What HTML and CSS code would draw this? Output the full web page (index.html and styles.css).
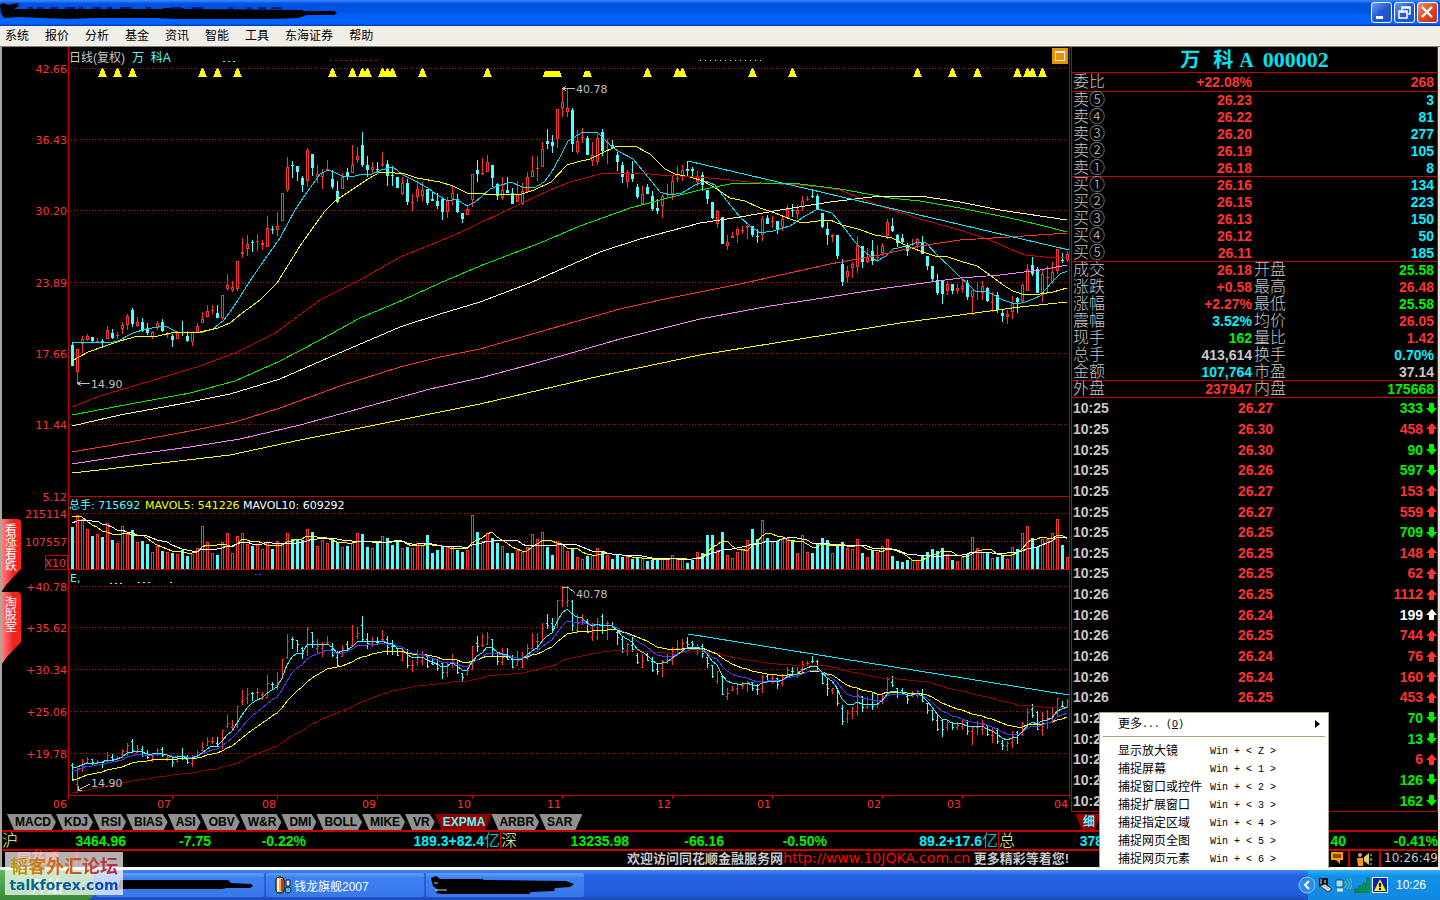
FILE: index.html
```html
<!doctype html>
<html lang="zh-CN">
<head>
  <meta charset="UTF-8">
  <meta name="viewport" content="width=device-width, initial-scale=1.0">
  <title>万科A 000002 日线</title>
  <link rel="stylesheet" href="styles.css">
</head>
<body>
  <header class="titlebar">
    <svg class="scribble" width="340" height="26" aria-hidden="true">
      <path d="M0 5 L3 3 L8 5 L18 3 L19 6 L14 9 L64 9 L163 9 L164 8 L183 8 L184 9 L303 10 L303 11 L334 11 L337 13 L334 15 L307 15 L298 18 L270 19 L176 19 L156 18 L94 18 L70 19 L18 17 L4 18 L1 13 Z"/>
      <path class="faint" d="M28 8h5m4 0h7m6 0h8m7 0h10m4 0h4m10 0h8m6 0h5m8 0h12m14 0h5m20 0h10m10 0h12m26 0h4m14 0h5m6 0h8m5 0h11"/>
    </svg>
    <div class="win-buttons">
      <button aria-label="最小化"><svg width="19" height="19"><path d="M4 13h7v3H4z" fill="#fff"/></svg></button>
      <button aria-label="还原"><svg width="19" height="19"><path d="M7 7V4h8v7h-3M4 8h8v7H4zM7 5h8M4 9h8" fill="none" stroke="#fff" stroke-width="1.5"/></svg></button>
      <button class="close" aria-label="关闭"><svg width="19" height="19"><path d="M4 4l10 10M14 4L4 14" stroke="#fff" stroke-width="2.4"/></svg></button>
    </div>
  </header>
  <nav class="menubar">
    <button>系统</button><button>报价</button><button>分析</button><button>基金</button><button>资讯</button><button>智能</button><button>工具</button><button>东海证券</button><button>帮助</button>
  </nav>

  <main class="app">
    <div class="work">
      <section class="chart-pane">
        <svg id="chart" viewBox="2 47 1068 765" role="img" aria-label="日线图"></svg>
        <a href="#" class="flag">看涨看跌</a>
        <a href="#" class="flag flag-low">淘股堂</a>
      </section>
      <section class="quote">
        <h1>万 <span>科</span>A <b>000002</b></h1>
        <table class="book"><tbody id="book"></tbody></table>
        <table class="ticks"><tbody id="ticks"></tbody></table>
      </section>
    </div>

    <div class="tabbar">
      <div class="tabs">
        <button>MACD</button><button>KDJ</button><button>RSI</button><button>BIAS</button><button>ASI</button><button>OBV</button><button>W&amp;R</button><button>DMI</button><button>BOLL</button><button>MIKE</button><button>VR</button><button class="active">EXPMA</button><button>ARBR</button><button class="last">SAR</button>
      </div>
      <div class="side-tabs"><button class="active">细</button></div>
    </div>

    <div class="indices">
      <div class="index sh"><i>沪</i><span>3464.96</span><span>-7.75</span><span>-0.22%</span><span class="cyan">189.3+82.4<em>亿</em></span></div>
      <div class="index sz"><i>深</i><span>13235.98</span><span>-66.16</span><span>-0.50%</span><span class="cyan">89.2+17.6<em>亿</em></span></div>
      <div class="index all"><i>总</i><span class="cyan">378</span><span>40</span><span>-0.41%</span></div>
    </div>

    <div class="news">
      <span class="brand">同花顺</span>
      <p>欢迎访问同花顺金融服务网<a href="#">http://www.10JQKA.com.cn</a> 更多精彩等着您!</p>
      <span class="box"><svg width="14" height="14"><path d="M1 1h12v8H10v4L6 9H1z" fill="#ff9a00"/><path d="M3 4h8M3 6h8" stroke="#000"/></svg></span>
      <span class="box wide"><svg width="16" height="16"><circle cx="4" cy="4" r="2" fill="#c8a080"/><path d="M1 7h6v8H2z" fill="#ff9a00"/><path d="M8 6l5-4v12l-5-4z" fill="#d8d070"/><path d="M15 3v2m0 2v3m0 2v2" stroke="#fff080"/></svg></span>
      <time>10:26:49</time>
    </div>
  </main>

  <footer class="taskbar">
    <button class="start">开始</button>
    <button class="task"><svg class="ink" width="145" height="16"><path d="M2 3 L110 3 L113 6 L133 7 L135 9 L132 11 L108 11 L104 12 L0 12Z"/></svg></button>
    <button class="task"><svg width="18" height="18"><path d="M2 4q0-3 4-3t4 3v10q0 3-4 3t-4-3z" fill="#f4b030" stroke="#000"/><path d="M4 2v14" stroke="#fff" stroke-width="2"/><path d="M8 3v12" stroke="#d03010" stroke-width="2"/><path d="M12 4h4v6h-4z" fill="#dde" stroke="#124"/><circle cx="14" cy="14" r="3" fill="#40c0d0" stroke="#124"/></svg>钱龙旗舰2007</button>
    <button class="task"><svg class="ink" width="148" height="18"><path d="M1 2 L6 0 L10 3 L52 3 L54 4 L136 5 L144 8 L140 11 L125 12 L124 15 L101 16 L99 18 L26 18 L18 19 L6 17 L8 14 L3 10Z"/><path d="M4 7h4m-3 7h12" stroke="#ccc"/></svg></button>
    <div class="tray">
      <button class="expand" aria-label="显示隐藏的图标"><svg width="18" height="18"><circle cx="9" cy="9" r="8" fill="#2f8be8" stroke="#8cc8ff"/><path d="M11 5L7 9l4 4" fill="none" stroke="#fff" stroke-width="2"/></svg></button>
      <svg width="15" height="16"><path d="M1 1h9v9H1z" fill="#111"/><path d="M3 2v5M7 3v3" stroke="#eee"/><path d="M2 9l5-2 7 5-4 3z" fill="#ccc" stroke="#444"/></svg>
      <svg width="17" height="16"><path d="M1 3h7v7H1z" fill="#9fe0f0" stroke="#347"/><path d="M2 13h6" stroke="#def" stroke-width="3"/><path d="M10 4q3 3 0 7M12 2q5 5 0 10M15 1q4 6 0 11" fill="none" stroke="#7ad040"/></svg>
      <svg width="16" height="16"><path d="M1 12h2v4H1zM5 9h2v7H5zM9 6h2v10H9zM13 1h2v15h-2z" fill="#14d014" stroke="#063"/></svg>
      <svg width="16" height="16"><path d="M0 0h16v16H0z" fill="#0820c0" stroke="#fff" stroke-width="2"/><path d="M8 2l6 12H2z" fill="#ffee00"/><path d="M8 6v4m0 1v2" stroke="#000" stroke-width="2"/></svg>
      <time>10:26</time>
    </div>
  </footer>

  <div class="watermark">
    <div class="forum">韬客外汇论坛</div>
    <div class="site">talkforex.com</div>
  </div>

  <div class="popup" role="menu">
    <button class="more">更多<kbd>... (<u>O</u>)</kbd><svg width="5" height="8"><path d="M0 0l5 4-5 4z"/></svg></button>
    <hr>
    <button><span>显示放大镜</span><kbd>Win + &lt; Z &gt;</kbd></button>
    <button><span>捕捉屏幕</span><kbd>Win + &lt; 1 &gt;</kbd></button>
    <button><span>捕捉窗口或控件</span><kbd>Win + &lt; 2 &gt;</kbd></button>
    <button><span>捕捉扩展窗口</span><kbd>Win + &lt; 3 &gt;</kbd></button>
    <button><span>捕捉指定区域</span><kbd>Win + &lt; 4 &gt;</kbd></button>
    <button><span>捕捉网页全图</span><kbd>Win + &lt; 5 &gt;</kbd></button>
    <button><span>捕捉网页元素</span><kbd>Win + &lt; 6 &gt;</kbd></button>
  </div>
  <script src="chart.js"></script>
</body>
</html>
```

FILE: styles.css
```css
* {
    box-sizing: border-box;
}
body {
    margin: 0;
    min-height: 100vh;
    display: flex;
    flex-direction: column;
    position: relative;
    background: #000;
    font-family: "Liberation Sans", "Noto Sans CJK SC", sans-serif;
    font-size: 12px;
    overflow-x: hidden;
}
button {
    border: 0;
    padding: 0;
    margin: 0;
    background: none;
    font: inherit;
    color: inherit;
}
a {
    text-decoration: none;
}

/* window frame */
.titlebar {
    height: 26px;
    display: flex;
    justify-content: flex-end;
    position: relative;
    background: linear-gradient(#3a8cff, #0050e0 15%, #0054e3 45%, #0062fb 60%, #0064ff 90%, #0038b0);
}
.scribble {
    position: absolute;
    left: 0;
    top: 0;
}
.scribble .faint {
    stroke: #001a80;
    stroke-width: 2;
}
.win-buttons {
    display: flex;
    gap: 2px;
    padding: 2px;
}
.win-buttons button {
    width: 21px;
    height: 21px;
    border: 1px solid #fff;
    border-radius: 3px;
    background: linear-gradient(135deg, #6a9cf0, #2458d8 50%, #1c50d0);
}
.win-buttons svg {
    display: block;
}
.win-buttons .close {
    background: linear-gradient(135deg, #f09070, #d84020 60%, #c83010);
}
.menubar {
    height: 21px;
    display: flex;
    gap: 16px;
    padding: 0 5px;
    background: #f0eee6;
    border-bottom: 1px solid #808070;
    color: #000;
    line-height: 17px;
}
.app {
    border-left: 2px solid #a8a898;
    border-right: 2px solid #f0e0dc;
}
.work {
    display: grid;
    grid-template-columns: 1fr 368px;
}

/* charts */
.chart-pane {
    position: relative;
}
#chart {
    display: block;
    width: 100%;
    shape-rendering: crispEdges;
    font-family: "DejaVu Sans", "Noto Sans CJK SC", sans-serif;
    font-size: 11px;
}
#chart polyline,
#chart path {
    fill: none;
    stroke-width: 1;
}
#chart .axis {
    stroke: #c80000;
}
#chart .dots {
    stroke: #c80000;
    stroke-dasharray: 1 2;
}
#chart .label {
    fill: #ff3232;
    text-anchor: end;
}
#chart .note {
    fill: #c0c0c0;
}
#chart .name {
    font-size: 12px;
    font-family: "Liberation Sans", "Noto Sans CJK SC", sans-serif;
}
#chart .marker {
    fill: #ffff00;
}
.flag {
    position: absolute;
    left: 0;
    top: 472px;
    width: 19px;
    height: 72px;
    padding: 5px 3px;
    border-radius: 0 4px 0 0;
    background: linear-gradient(90deg, #ff8080, #f02020 60%, #ff2020);
    clip-path: polygon(0 0, 100% 0, 100% 50px, 4px 66px, 0 100%);
    color: #fff;
    line-height: 12px;
}
.flag-low {
    top: 545px;
}

/* quote panel */
.quote {
    margin-left: 1px;
    border: 1px solid #c80000;
    border-width: 0 1px 1px;
    color: #c8c8c8;
}
.quote h1 {
    margin: 0;
    height: 25px;
    text-align: center;
    color: #00e4f4;
    font: bold 20px/26px "Liberation Serif", "Noto Sans CJK SC", serif;
}
.quote h1 span {
    margin: 0 6px 0 8px;
}
.quote h1 b {
    margin-left: 5px;
    font-size: 22px;
}
.quote table {
    width: 100%;
    border-collapse: separate;
    border-spacing: 0;
    table-layout: fixed;
}
.quote td,
.quote th {
    padding: 0;
    text-align: right;
    font-size: 14px;
    font-weight: bold;
    line-height: 16px;
}
.quote .book th {
    width: 34px;
    height: 17px;
    font-size: 16px;
    font-weight: 300;
    text-align: left;
    white-space: nowrap;
}
.quote .book th:first-child {
    padding-left: 1px;
}
.quote .book td:last-child {
    padding-right: 3px;
}
.book td:nth-child(2) {
    width: 146px;
}
.quote .book th:nth-child(3) {
    padding-left: 2px;
    width: 36px;
}
.book .rule > * {
    border-top: 1px solid #c80000;
}
.quote .book .tall > * {
    height: 19px;
}
.ticks {
    height: 414px;
    border-top: 1px solid #c80000;
}
.quote .ticks th {
    width: 60px;
    padding-left: 1px;
    text-align: left;
}
.ticks td:nth-child(2) {
    width: 141px;
}
.ticks td:last-child {
    width: 14px;
}
.ticks svg {
    display: block;
    margin-left: auto;
}
.red { color: #ff3232; fill: #ff3232; }
.green { color: #00f000; fill: #00f000; }
.cyan { color: #00f0ff; }
.gray { color: #c8c8c8; }
.white { color: #fff; fill: #fff; }

/* indicator tabs */
.tabbar {
    display: grid;
    grid-template-columns: 1fr 368px;
    height: 18px;
    padding-top: 2px;
}
.tabs,
.side-tabs {
    display: flex;
    padding-left: 5px;
}
.tabbar button {
    height: 16px;
    padding: 0 5px 0 8px;
    background: #909090;
    clip-path: polygon(0 0, calc(100% - 5px) 0, 100% 50%, calc(100% - 4px) 100%, 7px 100%);
    color: #000;
    font-size: 12px;
    font-weight: bold;
    line-height: 16px;
}
.tabbar .last {
    padding-right: 10px;
    clip-path: polygon(0 0, 100% 0, calc(100% - 7px) 100%, 7px 100%);
}
.tabbar .active {
    padding-right: 6px;
    background: #900000;
    clip-path: polygon(0 0, 100% 0, calc(100% - 6px) 100%, 7px 100%);
    color: #60f8ff;
}

/* market indices */
.indices {
    display: grid;
    grid-template-columns: 498fr 498fr 440fr;
    height: 21px;
    border: solid #c80000;
    border-width: 2px 0;
    font-size: 14px;
    font-weight: bold;
    line-height: 18px;
}
.index {
    display: grid;
    grid-template-columns: 34px 90px 85px 95px 1fr;
    color: #00f000;
    text-align: right;
    overflow: hidden;
    white-space: nowrap;
}
.index + .index {
    border-left: 1px solid #c80000;
}
.index.sz {
    grid-template-columns: 34px 94px 95px 103px 1fr;
}
.index.all {
    grid-template-columns: 34px 70px 1fr 92px;
}
.index i,
.index em {
    font-size: 16px;
    font-style: normal;
    font-weight: 300;
}
.index i {
    color: #ffffa0;
    text-align: left;
}
.index .cyan {
    color: #00f0ff;
}
.news {
    display: flex;
    justify-content: flex-end;
    height: 16px;
    line-height: 15px;
    color: #c8c8c8;
}
.brand {
    width: 75px;
    margin-right: auto;
    padding-left: 15px;
    border-right: 1px solid #c80000;
    color: #e03020;
    font-size: 14px;
    font-weight: bold;
}
.news p {
    margin: 0 261px 0 0;
    font-size: 13px;
    font-weight: bold;
    white-space: nowrap;
}
.news a {
    color: #ff0000;
    font-family: "DejaVu Sans", sans-serif;
    font-size: 14px;
    font-weight: normal;
}
.news .box {
    width: 20px;
    border-right: 2px solid #c80000;
}
.news .wide {
    width: 31px;
    padding-left: 6px;
}
.news time {
    width: 57px;
    font-family: "DejaVu Sans", sans-serif;
    text-align: right;
}

/* desktop taskbar */
.taskbar {
    flex: 1 0 33px;
    display: flex;
    gap: 2px;
    border-top: 3px solid #fff;
    background: linear-gradient(#3f8cf0, #2460e0 20%, #245edb 80%, #1a48b8);
    color: #fff;
}
.start {
    width: 94px;
    border-radius: 0 8px 8px 0;
    background: linear-gradient(#60b860, #388838);
    font-size: 16px;
}
.task {
    flex: 0 1 158px;
    display: flex;
    align-items: center;
    gap: 2px;
    margin: 3px 0;
    padding-left: 8px;
    border-radius: 2px;
    background: linear-gradient(#60a0ff, #3c80f0 20%, #3878e8);
}
.start + .task {
    flex-basis: 168px;
}
.task .ink {
    margin-left: -4px;
    fill: #000;
}
.start + .task .ink {
    margin-left: 14px;
}
.tray {
    margin-left: auto;
    display: flex;
    align-items: center;
    gap: 2px;
    width: 132px;
    background: linear-gradient(#30b0f8, #1290e8 20%, #1188e0);
}
.tray .expand {
    margin-left: -10px;
    height: 18px;
}
.tray time {
    margin-left: 6px;
}

/* floating layers */
.watermark {
    position: absolute;
    left: 5px;
    top: 852px;
    width: 118px;
    height: 43px;
    background: rgba(255, 255, 255, .7);
    text-align: center;
    font-weight: bold;
}
.forum {
    padding-top: 5px;
    background: linear-gradient(90deg, #c0a000, #d06020 50%, #b02050);
    -webkit-background-clip: text;
    background-clip: text;
    color: transparent;
    font-size: 18px;
    line-height: 20px;
}
.site {
    background: linear-gradient(90deg, #007080, #1040c0);
    -webkit-background-clip: text;
    background-clip: text;
    color: transparent;
    font-family: "DejaVu Sans", sans-serif;
    font-size: 14px;
    line-height: 16px;
}
.popup {
    position: absolute;
    right: 111px;
    top: 712px;
    width: 230px;
    padding: 2px 3px 0;
    border: 1px solid #a8a878;
    border-bottom: 0;
    background: #fff;
    color: #000;
}
.popup button {
    display: flex;
    align-items: center;
    width: 100%;
    height: 18px;
    padding-left: 15px;
    line-height: 16px;
    text-align: left;
}
.popup span {
    width: 92px;
}
.popup kbd {
    font: 10px "Liberation Mono", monospace;
}
.popup .more {
    padding-right: 5px;
}
.popup .more svg {
    margin-left: auto;
}
.popup hr {
    margin: 3px 0 5px;
    border: 0;
    border-top: 1px solid #a8a878;
}
```

FILE: chart.js
```js
// high, low, body top, body bottom (all in chart units), colour, volume
const days = `342,366,345,366,c,42 349,383,349,372,r,54 336,353,339,344,r,50 334,341,336,340,r,40 337,343,337,341,c,33
338,343,341,341,r,35 339,348,341,341,c,32 326,339,330,339,r,46 329,339,333,338,c,29 332,339,335,335,r,26
322,334,325,329,r,43 314,330,316,325,r,35 308,327,310,324,c,39 317,327,322,326,r,27 318,332,322,331,c,28
323,335,328,333,c,25 331,339,332,337,r,17 321,330,323,328,r,23 319,332,322,331,c,18 332,338,333,335,r,17
334,347,336,340,c,16 331,339,332,339,r,15 321,336,332,332,c,19 331,342,336,341,c,13 331,346,332,342,r,15
323,332,326,332,r,21 312,323,319,323,r,43 305,317,311,317,r,27 305,314,310,310,r,16 305,318,313,318,c,14
295,320,295,318,r,27 274,291,285,289,r,36 281,292,287,290,r,16 261,291,261,289,r,33 238,258,252,254,r,36
235,256,244,249,r,25 240,252,242,242,c,23 234,251,241,241,r,25 240,250,243,245,r,20 216,247,228,247,r,27
226,234,229,229,c,20 212,236,226,230,r,28 193,221,193,221,r,25 157,192,167,190,r,36 161,178,165,165,c,30
166,181,166,172,c,30 176,192,178,185,c,29 148,187,150,181,r,40 154,176,154,168,c,37 165,183,174,177,r,23
169,189,173,177,r,29 160,171,169,169,r,26 170,189,179,187,c,31 181,203,191,202,c,27 173,189,177,189,r,22
168,180,172,177,c,23 145,173,165,173,r,26 147,163,156,160,r,36 132,167,145,165,c,35 156,177,165,170,c,22
162,174,167,170,r,21 162,172,169,169,c,26 152,167,164,164,r,33 160,186,164,176,c,31 166,186,175,175,c,24
177,188,177,188,c,29 177,195,183,194,r,21 179,205,183,202,c,22 194,211,202,202,r,21 180,202,189,197,r,26
182,201,190,196,r,24 189,205,189,203,c,34 192,201,199,201,c,16 193,209,201,206,c,19 199,220,199,212,c,23
197,218,200,212,r,22 186,205,193,199,r,22 194,213,199,212,c,19 213,223,213,219,c,17 206,215,209,215,r,19
174,207,174,200,r,54 160,182,170,174,c,37 158,175,173,173,r,28 155,172,162,172,r,36 165,187,165,178,c,31
183,200,184,196,c,26 177,200,190,198,r,23 177,193,190,193,c,16 188,204,193,204,c,16 181,202,194,202,r,19
183,205,191,204,r,17 172,193,177,192,r,22 156,177,171,177,r,35 156,181,168,168,r,30 142,167,149,167,r,37
129,149,141,144,c,22 135,153,142,146,c,14 109,148,109,139,r,28 89,117,102,108,r,25 89,117,108,112,r,18
108,152,110,144,c,20 130,154,141,152,r,12 128,143,137,137,r,10 136,155,138,155,c,13 142,166,155,161,r,14
134,165,138,162,r,21 129,156,132,151,c,18 139,164,142,142,r,14 140,148,145,148,c,10 152,171,155,162,c,14
162,183,165,177,c,12 170,188,172,182,r,13 161,182,173,179,c,10 184,199,187,197,c,11 186,204,194,204,r,11
184,194,187,194,c,8 191,211,196,209,c,9 199,214,208,211,c,10 194,218,196,206,r,10 184,199,194,194,r,10
176,200,181,194,r,14 166,182,178,178,r,11 165,181,170,177,r,11 161,176,169,171,c,6 167,176,169,171,c,9
171,186,176,182,r,17 172,191,175,185,c,16 190,204,190,199,c,34 202,219,202,218,c,34 210,228,211,224,r,19
217,244,217,244,c,37 235,250,242,246,r,14 232,238,236,238,r,11 227,243,229,235,r,17 226,234,230,230,r,19
225,239,226,228,r,29 226,237,226,235,c,40 229,243,236,236,c,30 216,241,219,235,r,49 215,224,218,224,c,31
216,228,221,221,r,27 221,234,221,229,c,28 215,231,219,227,r,30 205,218,209,218,r,31 204,217,210,210,c,28
205,219,210,214,r,16 196,211,201,207,r,34 196,201,199,199,r,17 189,198,196,196,c,16 194,209,196,209,c,26
213,228,213,227,c,31 222,245,229,235,c,29 234,242,235,237,r,16 235,259,235,256,c,24 259,286,264,282,c,27
266,283,271,277,r,21 262,278,264,268,r,20 236,273,245,267,r,30 246,268,246,262,c,16 248,263,257,262,r,12
240,265,251,261,c,19 245,262,257,257,r,17 243,256,246,253,r,23 219,239,222,236,r,30 218,232,226,231,c,13
234,247,235,243,c,8 234,244,238,242,c,7 243,256,246,251,c,9 239,246,244,244,r,9 238,248,239,245,r,9
236,254,243,254,c,13 256,270,256,266,c,17 266,281,266,279,c,20 274,295,280,293,c,18 280,304,281,294,c,21
281,295,284,291,r,15 284,294,284,291,c,9 284,294,288,291,r,8 280,293,286,289,r,12 280,300,283,297,c,15
290,315,290,297,r,32 282,300,291,291,r,21 281,300,286,293,r,17 287,302,288,301,c,16 292,312,302,302,r,11
292,313,295,310,c,12 309,322,313,316,c,14 310,324,314,317,r,10 296,319,303,312,r,22 297,313,298,302,c,20
284,302,285,301,r,36 264,291,269,291,r,43 257,276,265,274,c,31 267,293,269,293,c,22 269,302,274,295,r,30
266,292,277,277,r,30 262,284,272,282,r,36 249,274,249,271,r,50 253,263,260,260,c,24 251,262,254,260,r,12`
    .split(/\s+/).map(s => s.split(',')).map(([hi, lo, top, bot, c, v]) =>
        ({ hi: +hi, lo: +lo, top: +top, bot: +bot, up: c === 'r', v: +v }));

const RED = '#ff3232', CYAN = '#50ffff';
const x = i => 72 + i * 5;
const lower = y => Math.round(587 + (y - 90) * 0.698);
let out = '';

function line(points, color) {
    out += `<polyline points="${points}" stroke="${color}"/>`;
}
function rule(x1, y1, x2, y2, cls) {
    out += `<path class="${cls}" d="M${x1} ${y1}L${x2} ${y2}"/>`;
}
function text(tx, ty, cls, s, fill) {
    out += `<text x="${tx}" y="${ty}" class="${cls}"${fill ? ` fill="${fill}"` : ''}>${s}</text>`;
}

// grid and scales
[[68, '42.66'], [139, '36.43'], [210, '30.20'], [282, '23.89'], [353, '17.66'], [424, '11.44'],
 [513, '215114'], [541, '107557'], [586, '+40.78'], [627, '+35.62'], [669, '+30.34'], [711, '+25.06'], [753, '+19.78']]
    .forEach(([y, s]) => {
        rule(71, y + .5, 1069, y + .5, 'dots');
        text(67, y + 5, 'label', s);
    });
text(67, 501, 'label', '5.12');
rule(68, 496.5, 1070, 496.5, 'axis');
rule(68, 569.5, 1070, 569.5, 'axis');
rule(68, 795.5, 1070, 795.5, 'axis');
rule(68.5, 47, 68.5, 796, 'axis');
rule(1069.5, 47, 1069.5, 797, 'axis');
out += '<path class="axis" d="M45.5 555.5h22v14h-22z"/>';
text(66, 567, 'label', 'X10');
[[68, '06'], [172, '07'], [277, '08'], [377, '09'], [472, '10'], [562, '11'], [672, '12'], [772, '01'], [882, '02'], [962, '03'], [1069, '04']]
    .forEach(([tx, s]) => {
        rule(tx + .5, 796, tx + .5, 799, 'axis');
        text(tx - 1, 808, 'label', s);
    });

// event markers
[102, 117, 132, 202, 217, 237, 332, 352, 362, 367, 382, 387, 392, 422, 487, 547, 552, 557, 587, 647, 677, 682,
 752, 792, 917, 952, 977, 1017, 1027, 1032, 1042].forEach(m => {
    const cut = m > 540 && m < 600;
    out += cut ? `<polygon class="marker" points="${m - 4},77 ${m - 2},71 ${m + 3},71 ${m + 5},77"/>`
               : `<polygon class="marker" points="${m - 4},77 ${m},68 ${m + 1},68 ${m + 5},77"/>`;
});

// candles, volume bars and the OHLC bars below
days.forEach((d, i) => {
    const c = d.up ? RED : CYAN, cx = x(i) + .5;
    const h = d.bot - d.top;
    if (d.up && h > 2) {
        out += `<path stroke="${c}" d="M${cx} ${d.hi}V${d.top}M${cx} ${d.bot}V${d.lo}M${cx - 1} ${d.top + .5}h2v${h - 1}h-2z"/>`;
    } else {
        out += `<path stroke="${c}" d="M${cx} ${d.hi}V${d.lo}"/><rect x="${x(i) - 1}" y="${d.top}" width="3" height="${Math.max(h, 1)}" fill="${c}"/>`;
    }
    out += d.up ? `<path stroke="${c}" d="M${cx - 1} 569V${569.5 - d.v}h2V569"/>`
                : `<rect x="${x(i) - 1}" y="${569 - d.v}" width="3" height="${d.v}" fill="${c}"/>`;
    const open = lower(d.up ? d.bot : d.top) + .5, close = lower(d.up ? d.top : d.bot) + .5;
    out += `<path stroke="${c}" d="M${cx} ${lower(d.hi)}V${lower(d.lo) + 1}M${cx - 1.5} ${open}h1M${cx + .5} ${close}h1"/>`;
});

// moving averages
line('72,343 93,342 108,343 118,341 133,333 146,329 158,327 165,326 177,332 192,333 203,332 213,329 224,320 232,309 238,300 248,284 265,259 280,238 295,210 305,195 313,184 320,174 328,170 334,172 342,176 352,177 362,174 372,174 381,170 393,167 403,175 415,181 428,188 437,195 448,201 456,199 467,206 475,202 481,197 490,189 498,186 511,182 522,187 534,188 544,182 551,173 560,157 568,141 583,132 598,133 610,145 618,151 633,159 648,177 660,192 670,195 682,193 695,185 705,181 715,185 727,201 740,217 750,226 760,233 773,231 790,226 805,216 818,209 832,213 842,225 855,242 866,253 877,261 886,256 893,249 907,246 918,242 926,243 938,256 950,267 960,277 968,284 975,291 985,291 992,294 1003,300 1012,303 1018,304 1028,301 1040,296 1052,282 1060,274 1067,271', '#00e0ff');
line('72,361 88,352 105,346 120,341 138,336 158,336 175,332 200,332 218,328 230,323 242,313 252,306 260,300 277,283 300,246 312,229 325,211 335,201 350,191 365,181 380,172 395,173 405,174 417,178 440,182 453,186 467,193 485,194 522,194 534,190 551,182 567,165 577,162 590,159 602,153 615,147 625,146 635,146 650,154 665,169 675,174 690,177 703,181 717,189 730,198 745,201 760,208 775,213 790,219 802,223 818,221 830,220 842,225 858,229 875,235 892,238 905,245 920,251 935,256 948,257 960,261 977,266 990,275 1003,285 1013,291 1022,294 1040,294 1053,292 1067,288', '#ffff00');
line('72,407 100,396 150,381 200,366 235,353 275,333 320,300 360,280 400,257 440,241 470,228 480,223 520,204 550,190 570,182 600,174 640,173 660,175 700,177 730,180 760,183 800,185 820,187 840,190 860,198 880,206 920,219 960,230 990,240 1010,249 1025,255 1045,257 1067,258', '#c80000');
line('72,415 130,404 190,393 235,381 280,361 320,340 360,318 403,300 440,283 480,266 540,243 580,226 630,208 660,200 700,190 730,184 760,183 800,184 840,189 890,198 920,201 960,208 1010,218 1040,225 1067,232', '#00f000');
line('72,426 120,415 180,404 230,394 280,379 330,357 400,327 440,314 480,302 530,283 600,252 640,239 700,223 740,217 780,210 830,202 880,196 920,196 960,202 1000,210 1067,220', '#ffffb0');
line('72,452 130,442 190,431 235,422 280,408 340,386 400,367 440,357 480,349 560,326 620,309 660,300 740,284 830,264 880,255 920,246 960,240 1010,237 1067,233', RED);
line('72,464 130,455 190,447 240,439 300,425 380,403 430,389 480,378 540,362 620,339 700,319 770,306 810,300 880,289 960,278 1000,275 1040,270 1067,265', '#ff80ff');
line('72,473 170,462 230,455 300,440 380,424 480,404 600,376 700,355 800,339 900,323 960,315 1020,307 1067,302', '#ffff00');
line('688,161 1069,250', '#00f0ff');
line('688,634 1069,695', '#00f0ff');

// volume averages, with the days before the first bar
const past = [38, 38, 38, 40, 40, 56, 56, 56, 56].concat(days.map(d => d.v));
function volumeAverage(n, color) {
    line(days.map((d, i) => {
        const part = past.slice(i + 10 - n, i + 10);
        return x(i) + ',' + Math.round(569 - part.reduce((a, b) => a + b) / n);
    }).join(' '), color);
}
volumeAverage(5, '#ffff00');
volumeAverage(10, '#ffffff');

// EXPMA
function expma(n, start, color) {
    let e = start;
    line(days.map((d, i) => {
        const close = 587 + ((d.up ? d.top : d.bot) - 90) * 0.698;
        if (i) e += (close - e) * 2 / (n + 1);
        return x(i) + ',' + Math.round(e);
    }).join(' '), color);
}
expma(60, 793, '#900000');
expma(20, 780, '#ffff00');
expma(10, 770, '#4040ff');
expma(5, 767, '#30ffff');

// captions
text(69, 62, 'name', '日线(复权)', '#c8c8c8');
text(132, 62, 'name', '万 &#160;科A', '#50ffff');
text(69, 509, '', '总手: 715692', '#50ffff');
text(145, 509, '', 'MAVOL5: 541226', '#ffff00');
text(243, 509, '', 'MAVOL10: 609292', '#ffffff');
text(70, 582, '', 'E,', '#50ffff');
text(576, 93, 'note', '40.78');
text(91, 388, 'note', '14.90');
text(576, 598, 'note', '40.78');
text(91, 787, 'note', '14.90');
out += '<path stroke="#c0c0c0" d="M562 88.5h13M566 86l-3 2.5 3 2.5M77 383.5h13M81 381l-3 2.5 3 2.5M562 587.5h6l7 5M90 784l-12 6v-4m0 4h4"/>';
out += '<path stroke="#ffff00" stroke-dasharray="1 4" d="M700 60.5h64"/><path stroke="#c80000" stroke-dasharray="2 3" d="M330 60.5h50"/><path stroke="#50ffff" stroke-dasharray="2 3" d="M223 61.5h12M110 583.5h12M138 582.5h12M170 582.5h4"/><path stroke="#4040ff" stroke-dasharray="2 2" d="M255 574.5h8"/>';
out += '<rect x="1052" y="48" width="16" height="16" fill="#f09000"/><path stroke="#fff" d="M1055.5 51.5h9v9h-9zM1055 52.5h10"/>';
document.getElementById('chart').innerHTML = out;

// order book
const book = [
    ['委比', '+22.08%', 'red', '', '268', 'red', 'rule tall'],
    ['卖⑤', '26.23', 'red', '', '3', 'cyan', 'rule'],
    ['卖④', '26.22', 'red', '', '81', 'cyan'],
    ['卖③', '26.20', 'red', '', '277', 'cyan'],
    ['卖②', '26.19', 'red', '', '105', 'cyan'],
    ['卖①', '26.18', 'red', '', '8', 'cyan'],
    ['买①', '26.16', 'red', '', '134', 'cyan', 'rule'],
    ['买②', '26.15', 'red', '', '223', 'cyan'],
    ['买③', '26.13', 'red', '', '150', 'cyan'],
    ['买④', '26.12', 'red', '', '50', 'cyan'],
    ['买⑤', '26.11', 'red', '', '185', 'cyan'],
    ['成交', '26.18', 'red', '开盘', '25.58', 'green', 'rule'],
    ['涨跌', '+0.58', 'red', '最高', '26.48', 'red'],
    ['涨幅', '+2.27%', 'red', '最低', '25.58', 'green'],
    ['震幅', '3.52%', 'cyan', '均价', '26.05', 'red'],
    ['现手', '162', 'green', '量比', '1.42', 'red'],
    ['总手', '413,614', 'gray', '换手', '0.70%', 'cyan'],
    ['金额', '107,764', 'cyan', '市盈', '37.14', 'gray'],
    ['外盘', '237947', 'red', '内盘', '175668', 'green', 'rule']
];
document.getElementById('book').innerHTML = book.map(([a, v, c, b, w, d, cls]) =>
    `<tr class="${cls || ''}"><th>${a}</th><td class="${c}">${v}</td><th>${b}</th><td class="${d}">${w}</td></tr>`).join('');

// tick list
const ticks = [
    ['10:25', '26.27', 333, 'green'], ['10:25', '26.30', 458, 'red'], ['10:25', '26.30', 90, 'green'],
    ['10:25', '26.26', 597, 'green'], ['10:25', '26.27', 153, 'red'], ['10:25', '26.27', 559, 'red'],
    ['10:25', '26.25', 709, 'green'], ['10:25', '26.25', 148, 'red'], ['10:25', '26.25', 62, 'red'],
    ['10:26', '26.25', 1112, 'red'], ['10:26', '26.24', 199, 'white'], ['10:26', '26.25', 744, 'red'],
    ['10:26', '26.24', 76, 'red'], ['10:26', '26.24', 160, 'red'], ['10:26', '26.25', 453, 'red'],
    ['10:26', '', 70, 'green'], ['10:26', '', 13, 'green'], ['10:26', '', 6, 'red'],
    ['10:26', '', 126, 'green'], ['10:26', '', 162, 'green']
];
document.getElementById('ticks').innerHTML = ticks.map(([t, p, v, c]) => {
    const arrow = c === 'green' ? 'M3 0h5v5h3l-5 6-6-6h3z' : 'M3 11h5V6h3L6 0 0 6h3z';
    return `<tr><th>${t}</th><td class="red">${p}</td><td class="${c}">${v}</td><td><svg class="${c}" width="11" height="11"><path d="${arrow}"/></svg></td></tr>`;
}).join('');
```
